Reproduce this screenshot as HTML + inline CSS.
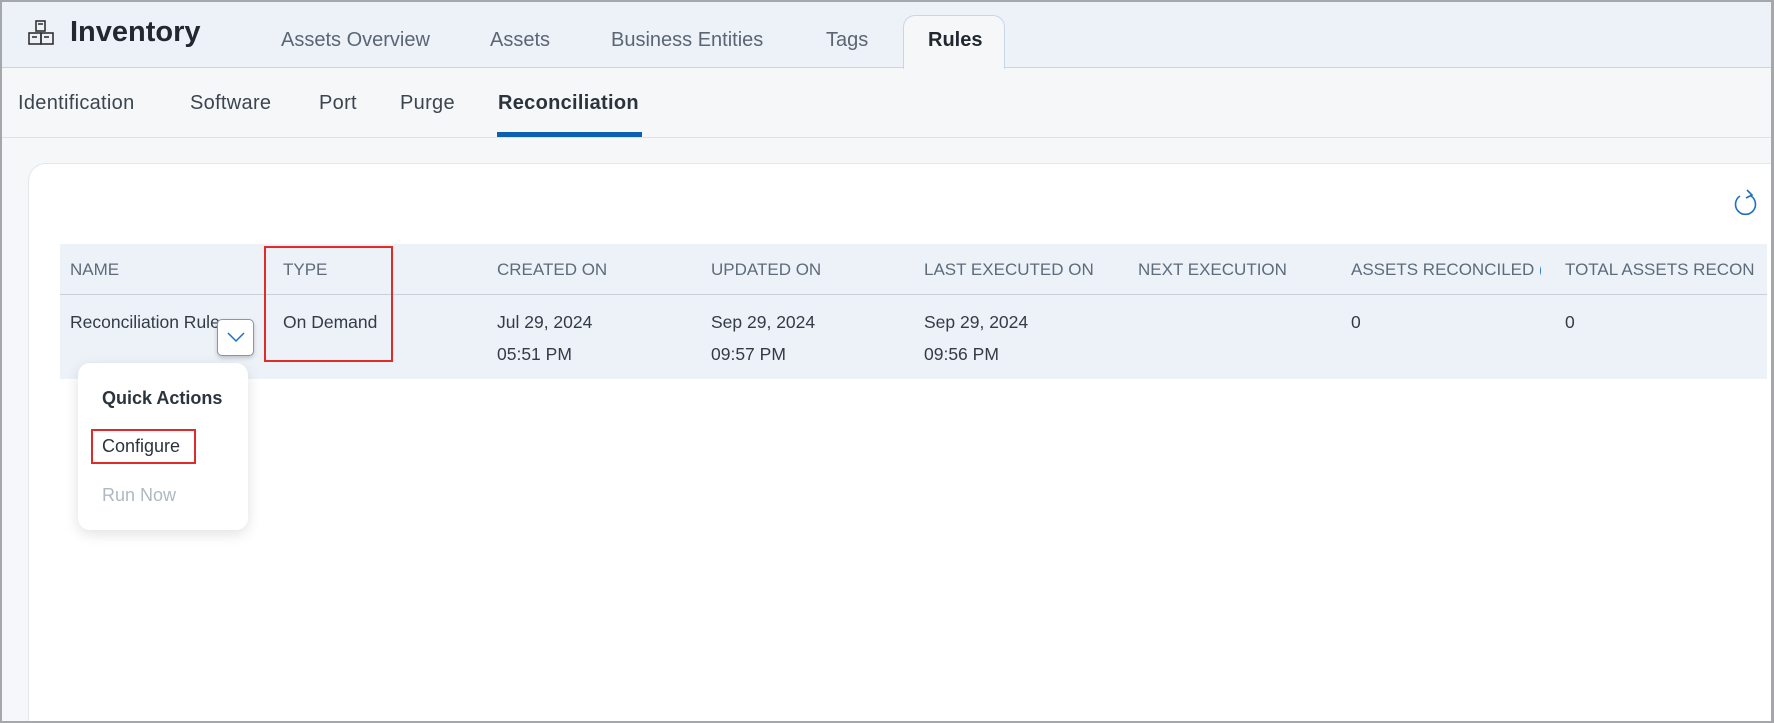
<!DOCTYPE html>
<html style="width:1774px;height:723px;overflow:hidden"><head><meta charset="utf-8"><style>
*{margin:0;padding:0;box-sizing:border-box}
body{width:1774px;height:723px;overflow:hidden;background:#f5f7f9;font-family:"Liberation Sans",sans-serif;position:relative;color:#2f3640}
.frame{position:absolute;left:0;top:0;width:1774px;height:723px;border:2px solid #a5a7aa;border-right-width:3px;pointer-events:none;z-index:50}
.hdr{position:absolute;left:0;top:0;width:1774px;height:68px;background:#edf2f9;border-bottom:1px solid #c9d6e6}
.abs{position:absolute;white-space:nowrap}
.tab{font-size:20px;color:#5b6672;top:29px}
.sub{position:absolute;left:0;top:68px;width:1774px;height:70px;background:#f6f7f8;border-bottom:1px solid #dfe3e7}
.st{font-size:20px;color:#3b4550;top:92px;letter-spacing:.3px}
.card{position:absolute;left:28px;top:163px;width:1760px;height:580px;background:#fff;border:1px solid #e3e7eb;border-radius:18px}
.th{position:absolute;left:60px;top:244px;width:1707px;height:51px;background:#edf2f9;border-bottom:1px solid #c9d0da}
.tr{position:absolute;left:60px;top:295px;width:1707px;height:84px;background:#edf2f9}
.h{font-size:17px;color:#5d6b7a;top:260px}
.c{font-size:17.5px;color:#333b45;line-height:32px;top:306px}
</style></head><body>
<div class="hdr"></div>
<svg class="abs" style="left:27px;top:20px" width="30" height="26" viewBox="0 0 30 26" fill="none" stroke="#333" stroke-width="1.6">
<rect x="9" y="1" width="9" height="10"/><line x1="11" y1="4" x2="16" y2="4"/>
<rect x="2" y="13" width="12" height="11"/><rect x="14" y="13" width="12" height="11"/>
<line x1="5" y1="17" x2="10" y2="17"/><line x1="17" y1="17" x2="22" y2="17"/></svg>
<div class="abs" style="left:70px;top:16px;font-size:29px;font-weight:bold;color:#22282f">Inventory</div>
<div class="abs tab" style="left:281px">Assets Overview</div>
<div class="abs tab" style="left:490px">Assets</div>
<div class="abs tab" style="left:611px">Business Entities</div>
<div class="abs tab" style="left:826px">Tags</div>
<div class="abs" style="left:903px;top:15px;width:102px;height:54px;background:#f6f7f8;border:1px solid #c9d6e6;border-bottom:none;border-radius:12px 12px 0 0;z-index:3"></div>
<div class="abs tab" style="left:928px;font-weight:bold;color:#22282f;z-index:4">Rules</div>
<div class="sub"></div>
<div class="abs st" style="left:18px">Identification</div>
<div class="abs st" style="left:190px">Software</div>
<div class="abs st" style="left:319px">Port</div>
<div class="abs st" style="left:400px">Purge</div>
<div class="abs st" style="left:498px;font-weight:bold;color:#2b333c">Reconciliation</div>
<div class="abs" style="left:497px;top:132px;width:145px;height:5px;background:#0d5fb3"></div>
<div class="card"></div>
<svg class="abs" style="left:1732px;top:188px" width="28" height="30" viewBox="0 0 28 30" fill="none" stroke="#1b6fc4" stroke-width="1.6">
<path d="M19 8 A10 10 0 1 1 8 8"/><path d="M15 2 L20 7 L14 10"/></svg>
<div class="th"></div><div class="tr"></div>
<div class="abs h" style="left:70px">NAME</div>
<div class="abs h" style="left:283px">TYPE</div>
<div class="abs h" style="left:497px">CREATED ON</div>
<div class="abs h" style="left:711px">UPDATED ON</div>
<div class="abs h" style="left:924px">LAST EXECUTED ON</div>
<div class="abs h" style="left:1138px">NEXT EXECUTION</div>
<div class="abs h" style="left:1351px;width:190px;overflow:hidden">ASSETS RECONCILED <span style="color:#1b6fc4">(</span></div>
<div class="abs h" style="left:1565px;width:200px;overflow:hidden">TOTAL ASSETS RECON</div>
<div class="abs c" style="left:70px;width:150px;overflow:hidden">Reconciliation Rule</div>
<div class="abs c" style="left:283px">On Demand</div>
<div class="abs c" style="left:497px">Jul 29, 2024<br>05:51 PM</div>
<div class="abs c" style="left:711px">Sep 29, 2024<br>09:57 PM</div>
<div class="abs c" style="left:924px">Sep 29, 2024<br>09:56 PM</div>
<div class="abs c" style="left:1351px">0</div>
<div class="abs c" style="left:1565px">0</div>
<div class="abs" style="left:217px;top:319px;width:37px;height:37px;background:#fff;border:1px solid #8a96a3;border-radius:5px;box-shadow:0 2px 4px rgba(0,0,0,.2)"></div>
<svg class="abs" style="left:226px;top:330px" width="20" height="14" viewBox="0 0 20 14" fill="none" stroke="#1b6fc4" stroke-width="1.5"><path d="M2 3 L10 11 L18 3"/></svg>
<div class="abs" style="left:264px;top:246px;width:129px;height:116px;border:2px solid #e02b2b"></div>
<div class="abs" style="left:78px;top:363px;width:170px;height:167px;background:#fff;border-radius:12px;box-shadow:0 4px 14px rgba(0,0,0,.12)"></div>
<div class="abs" style="left:102px;top:388px;font-size:18px;font-weight:bold;color:#2b333c">Quick Actions</div>
<div class="abs" style="left:102px;top:436px;font-size:18px;color:#2b333c">Configure</div>
<div class="abs" style="left:91px;top:429px;width:105px;height:35px;border:2px solid #e02b2b"></div>
<div class="abs" style="left:102px;top:485px;font-size:18px;color:#b0b8c1">Run Now</div>
<div class="frame"></div>
</body></html>
